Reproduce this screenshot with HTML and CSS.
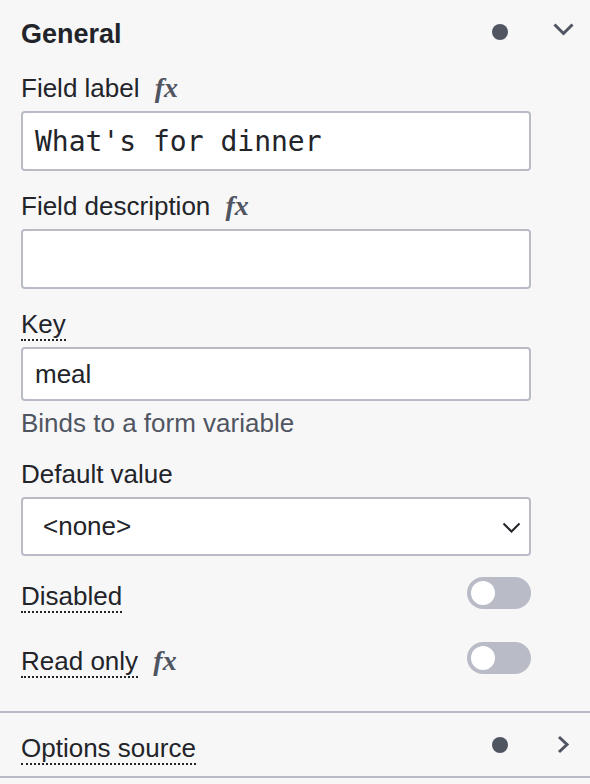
FILE: index.html
```html
<!DOCTYPE html>
<html>
<head>
<meta charset="utf-8">
<link rel="stylesheet" href="styles.css">
</head>
<body>
<div class="panel">
  <div class="group-header">
    <span class="group-title">General</span>
    <span class="group-actions">
      <span class="dot"></span>
      <svg class="chev" width="24" height="24" viewBox="0 0 24 24"><path d="M2.5 4.5 L11.5 13.5 L20.5 4.5" fill="none" stroke="#505562" stroke-width="3"/></svg>
    </span>
  </div>
  <div class="group-body">
    <div class="entry">
      <div class="label">Field label <span class="fx">fx</span></div>
      <div class="input mono">What's for dinner</div>
    </div>
    <div class="entry">
      <div class="label">Field description <span class="fx">fx</span></div>
      <div class="input mono"></div>
    </div>
    <div class="entry">
      <div class="label"><span class="dotted">Key</span></div>
      <div class="input key">meal</div>
      <div class="desc">Binds to a form variable</div>
    </div>
    <div class="entry last-entry">
      <div class="label">Default value</div>
      <div class="select">
        <span>&lt;none&gt;</span>
        <svg class="select-chev" width="20" height="12" viewBox="0 0 20 12"><path d="M1.5 1.5 L9.5 9.5 L17.5 1.5" fill="none" stroke="#22242a" stroke-width="2"/></svg>
      </div>
    </div>
    <div class="toggle-row">
      <span class="row-label"><span class="dotted">Disabled</span></span>
      <span class="toggle"><span class="knob"></span></span>
    </div>
    <div class="toggle-row">
      <span class="row-label"><span class="dotted">Read only</span> <span class="fx">fx</span></span>
      <span class="toggle"><span class="knob"></span></span>
    </div>
  </div>
  <div class="group-header closed">
    <span class="row-label"><span class="dotted">Options source</span></span>
    <span class="group-actions">
      <span class="dot"></span>
      <svg class="chev" width="24" height="24" viewBox="0 0 24 24"><path d="M7 4 L15 11.5 L7 19" fill="none" stroke="#505562" stroke-width="3"/></svg>
    </span>
  </div>
</div>
</body>
</html>
```
FILE: styles.css
```css
html, body {
  margin: 0;
  padding: 0;
  background: #f7f7f8;
}
body {
  font-family: "Liberation Sans", Arial, sans-serif;
  font-size: 26px;
  color: #22242a;
  width: 590px;
  height: 784px;
  overflow: hidden;
}
.panel {
  display: flex;
  flex-direction: column;
}
.group-header {
  height: 64px;
  display: flex;
  align-items: center;
  justify-content: space-between;
  padding: 0 14px 0 21px;
}
.group-title {
  font-weight: bold;
  font-size: 27px;
  padding-top: 4px;
}
.group-actions {
  display: flex;
  align-items: center;
  gap: 44px;
}
.dot {
  width: 16px;
  height: 16px;
  border-radius: 50%;
  background: #505562;
}
.chev {
  display: block;
}
.group-body {
  padding: 8px 59px 37px 21px;
  display: flex;
  flex-direction: column;
  border-bottom: 2px solid #b9bcc6;
}
.entry {
  display: flex;
  flex-direction: column;
  margin-bottom: 19px;
}
.entry.last-entry {
  margin-bottom: 21px;
}
.label {
  line-height: 32px;
  height: 32px;
  margin-bottom: 7px;
}
.fx {
  font-family: "Liberation Serif", serif;
  font-style: italic;
  font-weight: bold;
  font-size: 28px;
  color: #505562;
  margin-left: 8px;
}
.dotted {
  border-bottom: 2px dotted #22242a;
  padding-bottom: 0;
}
.row-label {
  padding-top: 6px;
  line-height: 32px;
}
.input {
  box-sizing: border-box;
  height: 60px;
  background: #fff;
  border: 2px solid #b9bcc6;
  border-radius: 4px;
  padding: 0 12px;
  display: flex;
  align-items: center;
}
.mono {
  font-family: "DejaVu Sans Mono", "Liberation Mono", monospace;
  font-size: 28px;
}
.key {
  height: 54px;
}
.desc {
  margin-top: 6px;
  line-height: 32px;
  color: #505562;
}
.select {
  position: relative;
  box-sizing: border-box;
  height: 59px;
  background: #fff;
  border: 2px solid #b9bcc6;
  border-radius: 4px;
  padding: 0 20px;
  display: flex;
  align-items: center;
}
.select-chev {
  position: absolute;
  right: 7px;
  top: 23px;
}
.toggle-row {
  display: flex;
  align-items: center;
  justify-content: space-between;
  height: 32px;
  margin-bottom: 33px;
}
.toggle-row:last-child {
  margin-bottom: 0;
}
.toggle {
  width: 64px;
  height: 32px;
  border-radius: 16px;
  background: #b9bbc6;
  display: flex;
  align-items: center;
  padding-left: 4px;
  box-sizing: border-box;
}
.knob {
  width: 24px;
  height: 24px;
  border-radius: 50%;
  background: #fff;
}
.group-header.closed {
  height: 63px;
  border-bottom: 2px solid #b9bcc6;
}
```
